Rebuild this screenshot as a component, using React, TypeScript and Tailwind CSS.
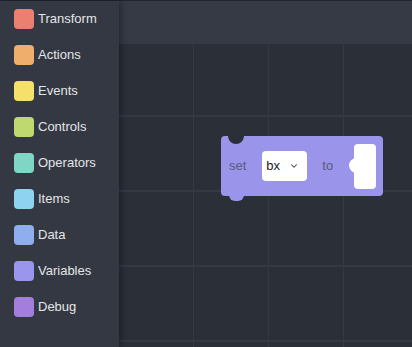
import { ChevronDown } from "lucide-react";

const categories = [
  { name: "Transform", color: "bg-[#eb7f71]" },
  { name: "Actions", color: "bg-[#efae6c]" },
  { name: "Events", color: "bg-[#f4e06b]" },
  { name: "Controls", color: "bg-[#bfd86f]" },
  { name: "Operators", color: "bg-[#80d5c5]" },
  { name: "Items", color: "bg-[#8ed3f0]" },
  { name: "Data", color: "bg-[#8eaeee]" },
  { name: "Variables", color: "bg-[#9a96ee]" },
  { name: "Debug", color: "bg-[#a47edc]" },
];

function Toolbox() {
  return (
    <aside className="relative z-10 w-[119px] shrink-0 bg-[#343842] shadow-[2px_0_6px_rgba(0,0,0,0.35)]">
      {categories.map((c) => (
        <div key={c.name} className="flex h-9 items-center pl-[14px]">
          <span className={`h-5 w-5 rounded-[4px] ${c.color}`} />
          <span className="ml-1 text-[13px] text-[#e4e5e8]">{c.name}</span>
        </div>
      ))}
    </aside>
  );
}

// "set [bx] to ( )" block
function SetBlock() {
  return (
    <div className="absolute left-[102px] top-[92px] flex h-[60px] w-[162px] items-center rounded-[4px] bg-[#9a94ea] pl-2 pr-[7px]">
      {/* notch on top */}
      <div className="absolute -top-2 left-[7px] h-4 w-4 rounded-full bg-[#2b2f38]" />
      {/* tab below */}
      <div className="absolute -bottom-[5px] left-2 h-[6px] w-[15px] rounded-b-[8px] bg-[#9a94ea]" />

      <span className="text-[13px] text-[#595b7c]">set</span>
      <div className="ml-4 flex h-[30px] w-[45px] items-center justify-between rounded-[4px] bg-white pl-1 pr-2">
        <span className="text-[13px] text-[#222]">bx</span>
        <ChevronDown className="h-[10px] w-[10px] text-[#444]" strokeWidth={2.5} />
      </div>
      <span className="ml-[15px] text-[13px] text-[#595b7c]">to</span>
      <div className="relative ml-auto h-[45px] w-[22px] rounded-[4px] bg-white">
        <div className="absolute -left-[5px] top-[14px] h-[15px] w-[15px] rounded-full bg-white" />
      </div>
    </div>
  );
}

export default function App() {
  return (
    <div className="flex h-screen w-full border-t border-[#22252c] font-['Liberation_Sans',Arial,sans-serif]">
      <Toolbox />
      <div className="flex min-w-0 flex-1 flex-col">
        <div className="h-[43px] shrink-0 bg-[#363a44]" />
        <div className="relative flex-1 overflow-hidden bg-[#2b2f38] bg-[linear-gradient(to_right,#353943_1px,transparent_1px),linear-gradient(to_bottom,#353943_2px,transparent_2px)] bg-size-[75px_75px] bg-position-[74px_71px]">
          <SetBlock />
        </div>
      </div>
    </div>
  );
}
